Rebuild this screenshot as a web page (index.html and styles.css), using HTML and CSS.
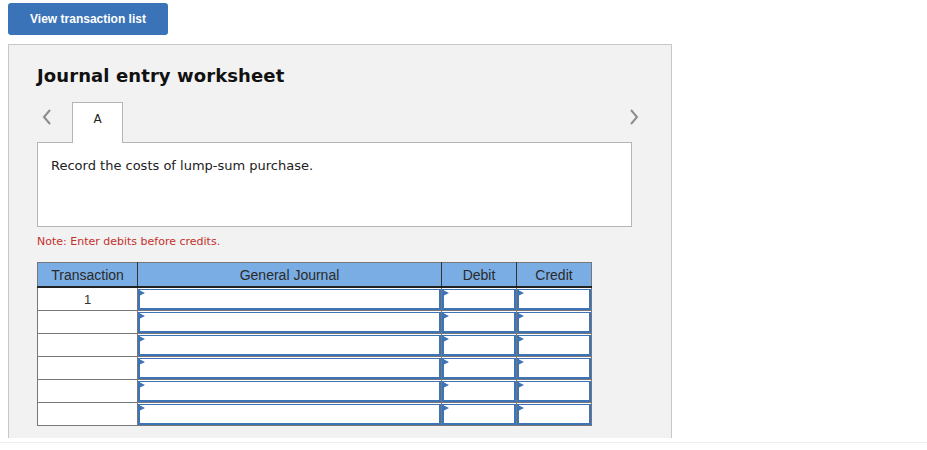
FILE: index.html
```html
<!DOCTYPE html>
<html lang="en">

<head>
  <meta charset="UTF-8" />
  <title>Journal entry worksheet</title>
  <link rel="stylesheet" href="styles.css">
</head>

<body>

  <button class="list-btn">View transaction list</button>

  <div class="worksheet">
    <h2>Journal entry worksheet</h2>

    <div class="tabs">
      <span class="arrow">
        <svg width="10" height="16" viewBox="0 0 10 16"><path d="M8 1 L2 8 L8 15" fill="none" stroke="#8c8c8c" stroke-width="2"/></svg>
      </span>
      <div class="tab">A</div>
      <span class="arrow right">
        <svg width="10" height="16" viewBox="0 0 10 16"><path d="M2 1 L8 8 L2 15" fill="none" stroke="#8c8c8c" stroke-width="2"/></svg>
      </span>
    </div>

    <div class="question">Record the costs of lump-sum purchase.</div>

    <p class="note">Note: Enter debits before credits.</p>

    <table class="journal">
      <thead>
        <tr>
          <th class="col-tr">Transaction</th>
          <th class="col-gj">General Journal</th>
          <th class="col-dr">Debit</th>
          <th class="col-cr">Credit</th>
        </tr>
      </thead>
      <tbody>
        <tr>
          <td class="num">1</td>
          <td><div class="field"></div></td>
          <td><div class="field"></div></td>
          <td><div class="field"></div></td>
        </tr>
        <tr>
          <td class="num"></td>
          <td><div class="field"></div></td>
          <td><div class="field"></div></td>
          <td><div class="field"></div></td>
        </tr>
        <tr>
          <td class="num"></td>
          <td><div class="field"></div></td>
          <td><div class="field"></div></td>
          <td><div class="field"></div></td>
        </tr>
        <tr>
          <td class="num"></td>
          <td><div class="field"></div></td>
          <td><div class="field"></div></td>
          <td><div class="field"></div></td>
        </tr>
        <tr>
          <td class="num"></td>
          <td><div class="field"></div></td>
          <td><div class="field"></div></td>
          <td><div class="field"></div></td>
        </tr>
        <tr>
          <td class="num"></td>
          <td><div class="field"></div></td>
          <td><div class="field"></div></td>
          <td><div class="field"></div></td>
        </tr>
      </tbody>
    </table>
  </div>

  <div class="footer-line"></div>

</body>

</html>
```

FILE: styles.css
```css
body {
  margin: 0;
  padding: 3px 8px 0;
  background: white;
  font-family: "DejaVu Sans", Verdana, sans-serif;
  color: #222;
}

.list-btn {
  display: block;
  width: 160px;
  height: 32px;
  background: #3b73b9;
  color: white;
  border: none;
  border-radius: 3px;
  font-family: "Liberation Sans", Arial, sans-serif;
  font-weight: bold;
  font-size: 12px;
  cursor: pointer;
}

.worksheet {
  margin-top: 9px;
  width: 634px;
  height: 393px;
  padding: 0 0 0 28px;
  background: #f2f2f2;
  border: 1px solid #c8c8c8;
  border-bottom: none;
}

h2 {
  margin: 0;
  padding-top: 20px;
  font-size: 18px;
  font-weight: bold;
  letter-spacing: 0.1px;
  color: #111;
}

.tabs {
  display: flex;
  align-items: flex-end;
  margin-top: 15px;
  height: 41px;
  width: 596px;
}

.arrow {
  width: 30px;
  padding-left: 5px;
  align-self: center;
  display: flex;
  margin-top: -10px;
}

.arrow.right {
  margin-left: auto;
  width: auto;
  padding: 0;
  margin-right: -6px;
}

.tab {
  width: 51px;
  height: 41px;
  box-sizing: border-box;
  background: white;
  border: 1px solid #b5b5b5;
  border-bottom: none;
  text-align: center;
  font-size: 12px;
  padding-top: 9px;
  position: relative;
  z-index: 1;
  margin-bottom: -1px;
}

.question {
  width: 595px;
  height: 85px;
  box-sizing: border-box;
  background: white;
  border: 1px solid #b5b5b5;
  padding: 15px 13px;
  font-size: 13px;
  color: #222;
}

.note {
  margin: 8px 0 0;
  font-size: 11px;
  color: #c4302b;
}

.journal {
  margin-top: 14px;
  border-collapse: collapse;
  width: 555px;
  font-family: "Liberation Sans", Arial, sans-serif;
  font-size: 14px;
}

.journal th {
  background: #7aade3;
  color: #2a2a2a;
  font-weight: normal;
  height: 23px;
  padding: 0;
  border: 1px solid #333;
  border-top-color: #777;
  border-bottom: 2px solid #222;
}

.journal th:first-child {
  border-left-color: #777;
}

.journal th:last-child {
  border-right-color: #777;
}

.col-tr {
  width: 99px;
}

.col-gj {
  width: 303px;
}

.col-dr {
  width: 74px;
}

.journal td {
  background: white;
  border: 1px solid #777;
  padding: 0;
  height: 22px;
}

.journal td.num {
  text-align: center;
  color: #333;
  font-size: 13px;
  vertical-align: middle;
}

.field {
  position: relative;
  height: 18px;
  border: 2px solid #3d74b8;
  border-top-width: 1px;
  margin: 0;
}

.field::before {
  content: "";
  position: absolute;
  left: -1px;
  top: 0;
  border-left: 6px solid #3d74b8;
  border-top: 3px solid transparent;
  border-bottom: 3px solid transparent;
}

.footer-line {
  margin: 4px -8px 0;
  border-top: 1px solid #ececec;
}
```
